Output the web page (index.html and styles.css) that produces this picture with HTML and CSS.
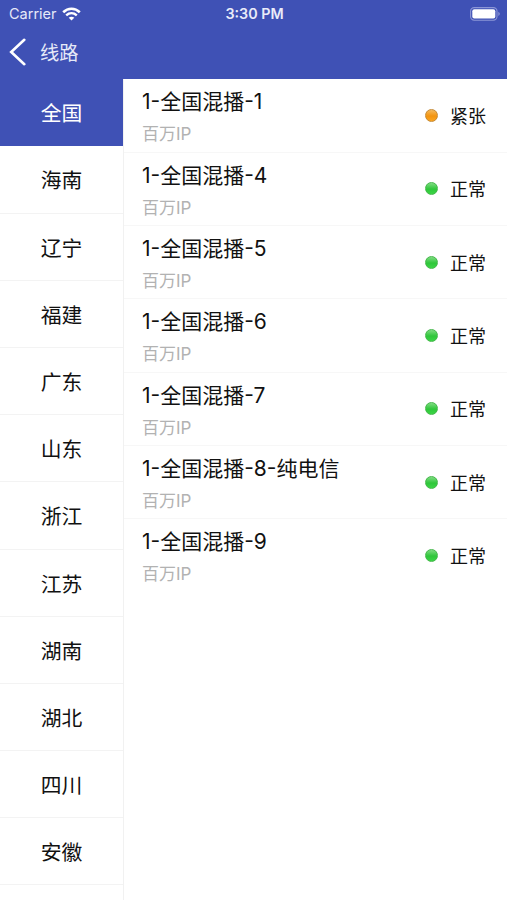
FILE: index.html
```html
<!DOCTYPE html>
<html lang="zh-CN">
<head>
    <meta charset="UTF-8">
    <meta name="viewport" content="width=device-width, initial-scale=1.0">
    <title>线路</title>
    <link rel="stylesheet" href="styles.css">
</head>
<body>
    <header class="header">
        <div class="status-bar">
            <div class="carrier">
                <span>Carrier</span>
                <svg class="wifi" width="19" height="14" viewBox="0 0 19 14">
                    <path d="M1.2 5.2C6 .6 13 .6 17.8 5.2" fill="none" stroke="#fff" stroke-width="2.6"/>
                    <path d="M4.2 8.4c3.1-2.8 7.5-2.8 10.6 0" fill="none" stroke="#fff" stroke-width="2.4"/>
                    <path d="M6.7 10.8c1.6-1.5 4-1.5 5.6 0L9.5 13.6z" fill="#fff"/>
                </svg>
            </div>
            <div class="time">3:30 PM</div>
            <svg class="battery" width="31" height="14" viewBox="0 0 31 14">
                <rect x=".6" y=".6" width="26.4" height="12.6" rx="3.6" fill="none" stroke="#8c96d6" stroke-width="1.1"/>
                <rect x="2.3" y="2.3" width="23" height="9.2" rx="2" fill="#fff"/>
                <path d="M28.3 4.8c2 .8 2 3.4 0 4.2z" fill="#8c96d6"/>
            </svg>
        </div>
        <div class="nav-bar">
            <svg class="back" width="18" height="28" viewBox="0 0 18 28">
                <path d="M15.3 1.8L2.2 14l13.1 12.2" fill="none" stroke="#fff" stroke-width="2.6" stroke-linecap="round"/>
            </svg>
            <span class="title">线路</span>
        </div>
    </header>

    <div class="content">
        <ul class="regions">
            <li class="active">全国</li>
            <li>海南</li>
            <li>辽宁</li>
            <li>福建</li>
            <li>广东</li>
            <li>山东</li>
            <li>浙江</li>
            <li>江苏</li>
            <li>湖南</li>
            <li>湖北</li>
            <li>四川</li>
            <li>安徽</li>
        </ul>
        <ul class="lines">
            <li>
                <div class="info"><div class="name">1-全国混播-1</div><div class="desc">百万IP</div></div>
                <span class="dot busy"></span><span class="state">紧张</span>
            </li>
            <li>
                <div class="info"><div class="name">1-全国混播-4</div><div class="desc">百万IP</div></div>
                <span class="dot"></span><span class="state">正常</span>
            </li>
            <li>
                <div class="info"><div class="name">1-全国混播-5</div><div class="desc">百万IP</div></div>
                <span class="dot"></span><span class="state">正常</span>
            </li>
            <li>
                <div class="info"><div class="name">1-全国混播-6</div><div class="desc">百万IP</div></div>
                <span class="dot"></span><span class="state">正常</span>
            </li>
            <li>
                <div class="info"><div class="name">1-全国混播-7</div><div class="desc">百万IP</div></div>
                <span class="dot"></span><span class="state">正常</span>
            </li>
            <li>
                <div class="info"><div class="name">1-全国混播-8-纯电信</div><div class="desc">百万IP</div></div>
                <span class="dot"></span><span class="state">正常</span>
            </li>
            <li>
                <div class="info"><div class="name">1-全国混播-9</div><div class="desc">百万IP</div></div>
                <span class="dot"></span><span class="state">正常</span>
            </li>
        </ul>
    </div>
</body>
</html>
```
FILE: styles.css
```css
* {
    box-sizing: border-box;
}
body {
    margin: 0;
    height: 100vh;
    display: flex;
    flex-direction: column;
    overflow: hidden;
    background: #fff;
    color: #111;
    font-family: Inter, "Noto Sans CJK SC", sans-serif;
}
ul {
    list-style: none;
    margin: 0;
    padding: 0;
}
.header {
    flex: none;
    height: 79.2px;
    background: #3f51b5;
    color: #fff;
}
.status-bar {
    display: grid;
    grid-template-columns: 1fr auto 1fr;
    align-items: center;
    height: 27px;
    padding: 0 7px 0 9px;
    font-size: 14.5px;
}
.carrier {
    display: flex;
    align-items: center;
    gap: 5px;
    color: #e6e9f8;
}
.time {
    font-size: 14.3px;
    font-weight: 600;
    color: #e9ebf9;
}
.battery {
    justify-self: end;
    margin-right: -1px;
}
.nav-bar {
    display: flex;
    align-items: center;
    height: 49px;
    padding-left: 9px;
}
.title {
    margin-left: 13px;
    font-size: 19.3px;
    color: #e6e9f8;
}
.content {
    flex: 1;
    display: flex;
    min-height: 0;
}
.regions {
    flex: none;
    width: 124px;
    border-right: 1px solid #f1f1f1;
}
.regions li {
    display: flex;
    align-items: center;
    justify-content: center;
    height: 67.2px;
    border-bottom: 1px solid #f3f3f3;
    font-size: 20.8px;
}
.regions .active {
    background: #3f51b5;
    border-color: #3f51b5;
    color: #fff;
}
.lines {
    flex: 1;
}
.lines li {
    display: flex;
    align-items: center;
    height: 73.35px;
    padding: 0 21px 0 18px;
    border-bottom: 1px solid #f7f7f7;
}
.lines li:last-child {
    border-bottom-color: transparent;
}
.info {
    flex: 1;
    padding-top: 6px;
}
.name {
    font-size: 21px;
    line-height: 32px;
}
.desc {
    font-size: 17px;
    line-height: 32px;
    color: #b2b2b2;
}
.dot {
    width: 13px;
    height: 13px;
    margin-right: 12px;
    border: 1px solid #45b84b;
    border-radius: 50%;
    background: linear-gradient(#7fdc82, #2fc63a 55%, #3bd545);
}
.dot.busy {
    border-color: #c58a35;
    background: linear-gradient(#f5b95c, #f3940f 55%, #fba41f);
}
.state {
    padding-bottom: 1px;
    font-size: 18px;
}
```
